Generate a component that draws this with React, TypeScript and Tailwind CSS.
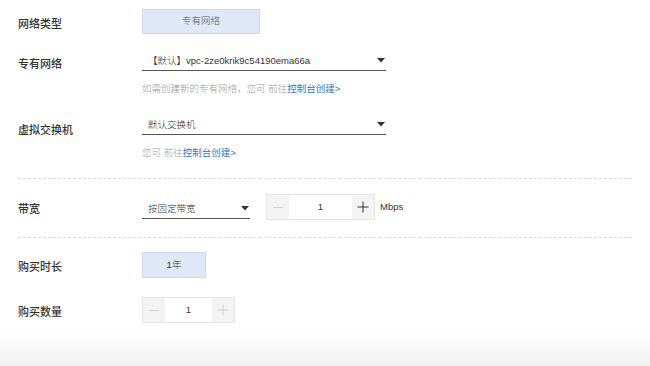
import React from "react";

const FONT = "font-['Helvetica_Neue','Liberation_Sans','Noto_Sans_CJK_SC',sans-serif]";

function Caret() {
  return (
    <svg width="8" height="5" viewBox="0 0 8 5" className="block">
      <path d="M0 0 H8 L4 4.5 Z" fill="#333" />
    </svg>
  );
}

function Select({ text, width }: { text: string; width: string }) {
  return (
    <div className={`${width} h-[24px] border-b border-[#555] flex items-end justify-between pl-[6px] pr-[1px] pb-[3px]`}>
      <span className="text-[9.5px] leading-[12px] font-light text-[#333]">{text}</span>
      <span className="mb-[4px]"><Caret /></span>
    </div>
  );
}

function Stepper({ width, plusDark }: { width: string; plusDark: boolean }) {
  return (
    <div className={`${width} h-[26px] border border-[#e6e6e6] flex`}>
      <div className="w-[22px] bg-[#f3f3f3] flex items-center justify-center">
        <div className="w-[10px] h-px bg-[#cfcfcf]" />
      </div>
      <div className="flex-1 bg-white flex items-center justify-center text-[9.5px] text-[#333]">1</div>
      <div className="w-[22px] bg-[#f3f3f3] flex items-center justify-center">
        <svg width="12" height="12" viewBox="0 0 12 12">
          <path d="M6 0.5 V11.5 M0.5 6 H11.5" stroke={plusDark ? "#333" : "#cfcfcf"} strokeWidth="1" />
        </svg>
      </div>
    </div>
  );
}

function Label({ children, className = "" }: { children: React.ReactNode; className?: string }) {
  return (
    <div className={`w-[124px] shrink-0 text-[11px] leading-[14px] font-medium text-[#333] ${className}`}>{children}</div>
  );
}

function Helper({ prefix }: { prefix: string }) {
  return (
    <div className="mt-[12px] text-[9.5px] leading-[12px] font-light text-[#999]">
      {prefix}
      <span className="text-[#2f78c4] font-normal">控制台创建&gt;</span>
    </div>
  );
}

export default function App() {
  return (
    <div className={`relative w-[650px] h-[366px] bg-white overflow-hidden ${FONT}`}>
      <div className="pl-[18px] pr-[18px] pt-[9px] flex flex-col">
        <div className="flex items-center h-[25px]">
          <Label className="pt-[4px]">网络类型</Label>
          <div className="w-[118px] h-[25px] bg-[#dfe8f6] border border-[#cdd9ec] flex items-center justify-center text-[9.5px] font-light text-[#555]">
            专有网络
          </div>
        </div>

        <div className="flex mt-[13px]">
          <Label className="pt-[10px]">专有网络</Label>
          <div className="flex flex-col">
            <Select text="【默认】vpc-2ze0krik9c54190ema66a" width="w-[244px]" />
            <Helper prefix="如需创建新的专有网络，您可 前往" />
          </div>
        </div>

        <div className="flex mt-[16px]">
          <Label className="pt-[12px]">虚拟交换机</Label>
          <div className="flex flex-col">
            <Select text="默认交换机" width="w-[244px]" />
            <Helper prefix="您可 前往" />
          </div>
        </div>

        <div className="mt-[19px] border-t border-dashed border-[#d9d9d9] w-[614px]" />

        <div className="flex items-center mt-[15px] h-[26px]">
          <Label className="pt-[4px]">带宽</Label>
          <Select text="按固定带宽" width="w-[108px]" />
          <div className="ml-[16px]">
            <Stepper width="w-[109px]" plusDark={true} />
          </div>
          <span className="ml-[5px] text-[9.5px] font-light text-[#333]">Mbps</span>
        </div>

        <div className="mt-[17px] border-t border-dashed border-[#d9d9d9] w-[614px]" />

        <div className="flex items-center mt-[14px] h-[26px]">
          <Label className="pt-[4px]">购买时长</Label>
          <div className="w-[64px] h-[26px] bg-[#dfe8f6] border border-[#cdd9ec] flex items-center justify-center text-[9.5px] font-light text-[#333]">
            1年
          </div>
        </div>

        <div className="flex items-center mt-[19px] h-[26px]">
          <Label className="pt-[4px]">购买数量</Label>
          <Stepper width="w-[93px]" plusDark={false} />
        </div>
      </div>

      <div className="absolute left-0 right-0 bottom-0 h-[34px] bg-gradient-to-b from-white to-[#f1f1f1]" />
    </div>
  );
}
